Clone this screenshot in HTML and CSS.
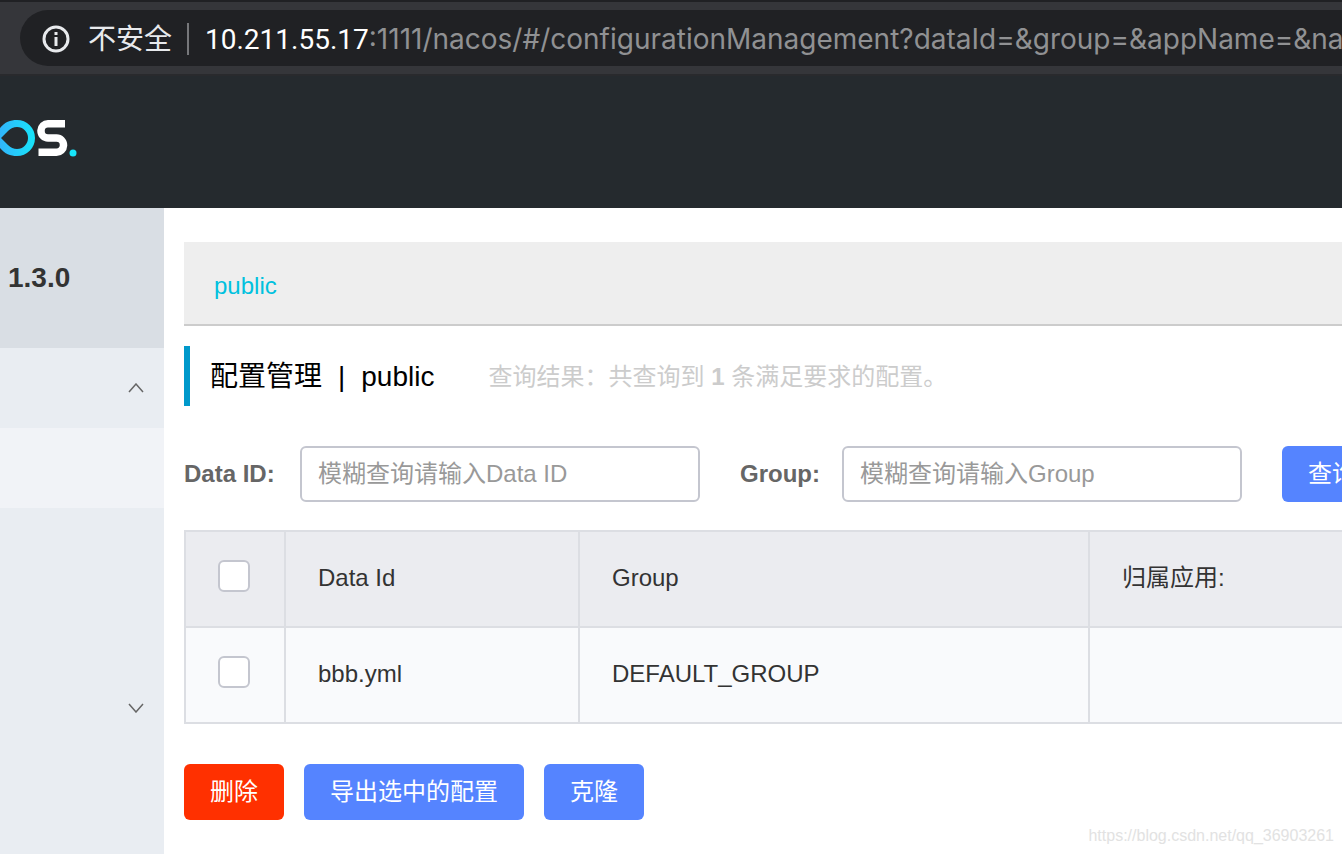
FILE: index.html
```html
<!DOCTYPE html>
<html lang="zh-CN">
<head>
<meta charset="utf-8">
<meta name="viewport" content="width=device-width, initial-scale=1">
<title>Nacos</title>
<link rel="stylesheet" href="styles.css">
</head>
<body>
<div class="toolbar">
  <div class="address">
    <svg class="info" viewBox="0 0 28 28" aria-hidden="true">
      <circle cx="14" cy="14" r="12" fill="none" stroke="currentColor" stroke-width="3"/>
      <path d="M12.500 7h3v3h-3zM12.500 12h3v9h-3z" fill="currentColor"/>
    </svg>
    <span class="insecure">不安全</span>
    <span class="url"><span class="host">10.211.55.17</span>:1111/nacos/#/configurationManagement?dataId=&amp;group=&amp;appName=&amp;na</span>
  </div>
</div>
<header class="header">
  <svg class="logo" viewBox="0 0 78 38" role="img" aria-label="Nacos">
    <defs>
      <linearGradient id="ring" x1="0" x2="1" y1="0" y2="0">
        <stop offset="0" stop-color="#31b5fb"/>
        <stop offset="1" stop-color="#17e5f9"/>
      </linearGradient>
    </defs>
    <path fill="url(#ring)" fill-rule="evenodd" d="M0 9C5 3 10 1 17 1A18 18 0 0 1 17 37C10 37 5 35 0 29ZM1 19L8 26Q12 30 17 30A11 11 0 0 0 17 8Q12 8 8 12Z"/>
    <path fill="none" stroke="#fff" stroke-width="7.500" d="M65 4.750H48A7 7 0 0 0 41 11.500V12A7 7 0 0 0 48 19H56.500A7 7 0 0 1 63.500 26V26.500A7 7 0 0 1 56.500 33.250H38.500"/>
    <circle cx="73" cy="34" r="3.500" fill="#17e5f9"/>
  </svg>
</header>
<div class="layout">
  <aside class="sidebar">
    <div class="version">1.3.0</div>
    <nav class="menu">
      <button class="item" type="button" aria-label="收起"><svg class="chevron" viewBox="0 0 16 10"><path d="M1 9l7-8 7 8"/></svg></button>
      <div class="item active"></div>
      <div class="item"></div>
      <div class="item"></div>
      <button class="item" type="button" aria-label="展开"><svg class="chevron" viewBox="0 0 16 10"><path d="M1 1l7 8 7-8"/></svg></button>
    </nav>
  </aside>
  <main class="main">
    <div class="namespaces"><a class="namespace" href="#">public</a></div>
    <div class="heading">
      <h1 class="title"><span>配置管理</span><span>|</span><span>public</span></h1>
      <p class="summary">查询结果：共查询到 <strong>1</strong> 条满足要求的配置。</p>
    </div>
    <form class="search">
      <label class="label" for="data-id">Data ID:</label>
      <input class="field" id="data-id" type="text" placeholder="模糊查询请输入Data ID">
      <label class="label second" for="group">Group:</label>
      <input class="field" id="group" type="text" placeholder="模糊查询请输入Group">
      <button class="button submit" type="button">查询</button>
    </form>
    <table class="table">
      <thead>
        <tr>
          <th class="col-check"><input class="check" type="checkbox" aria-label="全选"></th>
          <th class="col-id">Data Id</th>
          <th class="col-group">Group</th>
          <th>归属应用:</th>
        </tr>
      </thead>
      <tbody>
        <tr>
          <td class="col-check"><input class="check" type="checkbox" aria-label="bbb.yml"></td>
          <td>bbb.yml</td>
          <td>DEFAULT_GROUP</td>
          <td></td>
        </tr>
      </tbody>
    </table>
    <div class="actions">
      <button class="button danger" type="button">删除</button>
      <button class="button" type="button">导出选中的配置</button>
      <button class="button" type="button">克隆</button>
    </div>
  </main>
</div>
<div class="watermark">https://blog.csdn.net/qq_36903261</div>
</body>
</html>
```
FILE: styles.css
```css
* {
  box-sizing: border-box;
}

body {
  margin: 0;
  min-height: 100vh;
  display: flex;
  flex-direction: column;
  position: relative;
  overflow: hidden;
  background: #fff;
  color: #333;
  font: 24px/36px "Liberation Sans", "Noto Sans CJK SC", sans-serif;
}

.toolbar {
  padding: 8px 0 8px 20px;
  background: #35363a;
  border-top: 2px solid #202124;
}

.address {
  display: flex;
  align-items: center;
  height: 56px;
  padding: 2px 0 0 22px;
  overflow: hidden;
  border-radius: 28px 0 0 28px;
  background: #202124;
  color: #e8eaed;
  font-family: Inter, "Noto Sans CJK SC", sans-serif;
  font-size: 28px;
  white-space: nowrap;
}

.info {
  flex: none;
  width: 28px;
  height: 28px;
  margin-right: 18px;
}

.insecure {
  padding-right: 15px;
  border-right: 2px solid #76777a;
  line-height: 32px;
}

.url {
  padding-left: 16px;
  color: #909193;
}

.host {
  color: #fff;
  font-family: Roboto, sans-serif;
}

.header {
  height: 134px;
  padding-top: 43px;
  border-top: 2px solid #292a2d;
  background: #252a2e;
}

.logo {
  display: block;
  width: 78px;
  height: 38px;
}

.layout {
  flex: 1;
  display: flex;
}

.sidebar {
  flex: none;
  width: 164px;
  background: #e9edf2;
}

.version {
  padding: 52px 8px;
  background: #d9dee4;
  font-size: 28px;
  font-weight: bold;
}

.menu {
  display: flex;
  flex-direction: column;
}

.item {
  display: flex;
  align-items: center;
  justify-content: flex-end;
  height: 80px;
  padding: 0 20px;
  border: 0;
  background: none;
  color: #666;
}

.active {
  background: #f1f3f7;
}

.chevron {
  width: 16px;
  height: 10px;
  fill: none;
  stroke: currentColor;
  stroke-width: 1.500;
}

.main {
  flex: 1;
  min-width: 0;
  padding: 34px 0 34px 20px;
}

.namespaces {
  padding: 26px 30px 20px;
  border-bottom: 2px solid #ccc;
  background: #eee;
}

.namespace {
  color: #00c1de;
  text-decoration: none;
}

.heading {
  display: flex;
  align-items: center;
  gap: 54px;
  height: 60px;
  margin: 20px 0 40px;
  padding: 2px 0 0 20px;
  border-left: 6px solid #0099cb;
  white-space: nowrap;
}

.title {
  display: flex;
  gap: 16px;
  margin: 0;
  color: #000;
  font-size: 28px;
  font-weight: normal;
}

.summary {
  margin: 0;
  color: #ccc;
}

.search {
  display: flex;
  align-items: center;
  margin-bottom: 28px;
}

.label {
  flex: none;
  width: 116px;
  color: #666;
  font-weight: bold;
}

.second {
  width: 102px;
  margin-left: 40px;
}

.field {
  flex: none;
  width: 400px;
  height: 56px;
  padding: 0 16px;
  border: 2px solid #c4c6cf;
  border-radius: 6px;
  background: #fff;
  color: #333;
  font: inherit;
}

.field::placeholder {
  color: #999;
}

.button {
  flex: none;
  height: 56px;
  padding: 0 26px;
  border: 0;
  border-radius: 6px;
  background: #5584ff;
  color: #fff;
  font: inherit;
}

.submit {
  margin-left: 40px;
}

.danger {
  background: #ff3000;
}

.table {
  width: 100%;
  table-layout: fixed;
  border: 2px solid #dcdee3;
  border-width: 2px 0 0 2px;
  border-spacing: 0;
}

.table th,
.table td {
  height: 96px;
  padding: 0 32px 2px;
  border: 2px solid #dcdee3;
  border-width: 0 2px 2px 0;
  background: #f9fafc;
  font-weight: normal;
  text-align: left;
}

.table th {
  background: #ebecf0;
}

.table th:last-child,
.table td:last-child {
  border-right: 0;
}

.col-check {
  width: 100px;
}

.col-id {
  width: 294px;
}

.col-group {
  width: 510px;
}

.check {
  display: block;
  appearance: none;
  width: 32px;
  height: 32px;
  margin: 0 0 4px;
  border: 2px solid #c4c6cf;
  border-radius: 6px;
  background: #fff;
}

.actions {
  display: flex;
  gap: 20px;
  margin-top: 40px;
}

.watermark {
  position: absolute;
  right: 8px;
  bottom: 8px;
  color: #e2e2e2;
  font-size: 16px;
  line-height: 20px;
}
```
